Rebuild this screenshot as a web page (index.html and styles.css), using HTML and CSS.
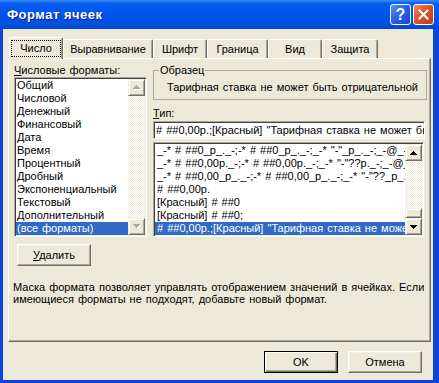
FILE: index.html
```html
<!DOCTYPE html>
<html lang="ru">

<head>
    <meta charset="UTF-8">
    <meta name="viewport" content="width=device-width, initial-scale=1.0">
    <title>Формат ячеек</title>
    <link rel="stylesheet" href="styles.css">
</head>

<body>
    <div class="window">
        <div class="titlebar">
            <span class="title">Формат ячеек</span>
            <div class="caption-buttons">
                <div class="cap-btn help">?</div>
                <div class="cap-btn close">
                    <svg width="11" height="11" viewBox="0 0 11 11"><path d="M1.5 1.5 L9.5 9.5 M9.5 1.5 L1.5 9.5" stroke="#fff" stroke-width="2" stroke-linecap="square"/></svg>
                </div>
            </div>
        </div>

        <div class="client">
            <div class="tabs">
                <div class="tab selected tab-number"><span class="focus">Число</span></div>
                <div class="tab tab-align">Выравнивание</div>
                <div class="tab tab-font">Шрифт</div>
                <div class="tab tab-border">Граница</div>
                <div class="tab tab-view">Вид</div>
                <div class="tab tab-protect">Защита</div>
            </div>

            <div class="panel">
                <div class="columns">
                    <div class="left-col">
                        <div class="label"><u>Ч</u>исловые форматы:</div>
                        <div class="listbox formats">
                            <div class="items">
                                <div class="item">Общий</div>
                                <div class="item">Числовой</div>
                                <div class="item">Денежный</div>
                                <div class="item">Финансовый</div>
                                <div class="item">Дата</div>
                                <div class="item">Время</div>
                                <div class="item">Процентный</div>
                                <div class="item">Дробный</div>
                                <div class="item">Экспоненциальный</div>
                                <div class="item">Текстовый</div>
                                <div class="item">Дополнительный</div>
                                <div class="item selected">(все форматы)</div>
                            </div>
                            <div class="scrollbar">
                                <div class="arrow">
                                    <svg width="8" height="5" viewBox="0 0 8 5"><path d="M4 1h1v1h1v1h1v1h1v1H1V4h1V3h1V2h1z" fill="#fff"/><path d="M3 0h1v1h1v1h1v1h1v1H0V3h1V2h1V1h1z" fill="#ACA899"/></svg>
                                </div>
                                <div class="track"></div>
                                <div class="arrow">
                                    <svg width="8" height="5" viewBox="0 0 8 5"><path d="M1 1h7v1H7v1H6v1H5v1H4V4H3V3H2V2H1z" fill="#fff"/><path d="M0 0h7v1H6v1H5v1H4v1H3V3H2V2H1V1H0z" fill="#ACA899"/></svg>
                                </div>
                            </div>
                        </div>
                        <button class="btn delete"><u>У</u>далить</button>
                    </div>

                    <div class="right-col">
                        <fieldset class="sample">
                            <legend>Образец</legend>
                            <div class="sample-text">Тарифная ставка не может быть отрицательной</div>
                        </fieldset>
                        <div class="label type-label"><u>Т</u>ип:</div>
                        <div class="textbox"># ##0,00р.;[Красный] "Тарифная ставка не может быть отрицательной"</div>
                        <div class="listbox types">
                            <div class="items">
                                <div class="item">_-* # ##0_р_._-;-* # ##0_р_._-;_-* "-"_р_._-;_-@_-</div>
                                <div class="item">_-* # ##0,00р._-;-* # ##0,00р._-;_-* "-"??р._-;_-@_-</div>
                                <div class="item">_-* # ##0,00_р_._-;-* # ##0,00_р_._-;_-* "-"??_р_._-;_-@_-</div>
                                <div class="item"># ##0,00р.</div>
                                <div class="item">[Красный] # ##0</div>
                                <div class="item">[Красный] # ##0;</div>
                                <div class="item selected"># ##0,00р.;[Красный] "Тарифная ставка не может быть отрицательной"</div>
                            </div>
                            <div class="scrollbar">
                                <div class="arrow">
                                    <svg width="7" height="4" viewBox="0 0 7 4"><path d="M3 0h1v1h1v1h1v1h1v1H0V3h1V2h1V1h1z" fill="#000"/></svg>
                                </div>
                                <div class="track">
                                    <div class="thumb"></div>
                                </div>
                                <div class="arrow">
                                    <svg width="7" height="4" viewBox="0 0 7 4"><path d="M0 0h7v1H6v1H5v1H4v1H3V3H2V2H1V1H0z" fill="#000"/></svg>
                                </div>
                            </div>
                        </div>
                    </div>
                </div>

                <p class="hint">Маска формата позволяет управлять отображением значений в ячейках. Если<br>имеющиеся форматы не подходят, добавьте новый формат.</p>
            </div>

            <div class="dialog-buttons">
                <button class="btn default">OK</button>
                <button class="btn">Отмена</button>
            </div>
        </div>
    </div>
</body>

</html>
```

FILE: styles.css
```css
body, html {
    margin: 0;
    padding: 0;
    font-family: "Liberation Sans", Arial, sans-serif;
    font-size: 11px;
    word-spacing: 1px;
    color: #000;
}

.window {
    width: 439px;
    height: 383px;
    box-sizing: border-box;
    background-color: #0A45DC;
    display: flex;
    flex-direction: column;
}

/* title bar */

.titlebar {
    height: 29px;
    flex-shrink: 0;
    display: flex;
    align-items: center;
    justify-content: space-between;
    padding: 0 5px 0 7px;
    background: linear-gradient(to bottom, #3D8EF7 0, #0A61F0 3px, #0058EE 8px, #0055E5 55%, #0050DD 85%, #0046CF 100%);
}

.title {
    color: white;
    font-weight: bold;
    font-size: 13px;
    letter-spacing: 0.5px;
    word-spacing: 0;
    text-shadow: 1px 1px #0F1A89;
}

.caption-buttons {
    display: flex;
    gap: 2px;
}

.cap-btn {
    width: 21px;
    height: 21px;
    box-sizing: border-box;
    border: 1px solid #fff;
    border-radius: 3px;
    display: flex;
    align-items: center;
    justify-content: center;
    color: white;
}

.help {
    background: linear-gradient(135deg, #5B8FF9 0%, #2A63E8 45%, #1847D0 100%);
    font-weight: bold;
    font-size: 16px;
}

.close {
    background: linear-gradient(135deg, #EE8A66 0%, #DE5428 45%, #C4381A 100%);
}

/* client area */

.client {
    flex: 1;
    margin: 0 6px 3px 3px;
    background-color: #ECE9D8;
    padding-top: 8px;
    display: flex;
    flex-direction: column;
}

.tabs {
    display: flex;
    align-items: flex-end;
    height: 21px;
    margin-left: 6px;
}

.tab {
    height: 19px;
    box-sizing: border-box;
    border: 1px solid;
    border-color: #fff #716F64 transparent #fff;
    border-bottom: none;
    border-radius: 2px 2px 0 0;
    box-shadow: inset -1px 0 #ACA899;
    display: flex;
    align-items: center;
    justify-content: center;
    background-color: #ECE9D8;
}

.tab.selected {
    height: 22px;
    margin-bottom: -1px;
    position: relative;
    z-index: 1;
}

.tab-number { width: 54px; }
.tab-align { width: 90px; }
.tab-font { width: 54px; }
.tab-border { width: 61px; }
.tab-view { width: 54px; }
.tab-protect { width: 56px; }

.focus {
    border: 1px dotted #000;
    padding: 1px 8px;
    line-height: 13px;
}

.panel {
    width: 423px;
    height: 284px;
    margin-left: 5px;
    box-sizing: border-box;
    border: 1px solid;
    border-color: #fff #716F64 #716F64 #fff;
    box-shadow: inset -1px -1px #ACA899;
    padding: 5px 0 0 5px;
}

.columns {
    display: flex;
    gap: 6px;
}

.left-col {
    width: 133px;
    display: flex;
    flex-direction: column;
    align-items: flex-start;
}

.right-col {
    width: 274px;
    display: flex;
    flex-direction: column;
}

.label {
    height: 13px;
    line-height: 13px;
    white-space: nowrap;
}

/* lists */

.listbox {
    box-sizing: border-box;
    border: 1px solid;
    border-color: #ACA899 #fff #fff #ACA899;
    box-shadow: inset 1px 1px #404040, inset -1px -1px #F1EFE2;
    background-color: #fff;
    padding: 1px;
    display: flex;
}

.formats {
    width: 133px;
    height: 160px;
}

.types {
    width: 271px;
    height: 95px;
    margin-top: 3px;
}

.items {
    flex: 1;
    overflow: hidden;
    min-width: 0;
}

.item {
    height: 13px;
    line-height: 13px;
    padding-left: 1px;
    white-space: nowrap;
    overflow: hidden;
}

.types .item {
    padding-left: 2px;
}

.item.selected {
    background-color: #316AC5;
    color: #fff;
}

.scrollbar {
    width: 17px;
    display: flex;
    flex-direction: column;
}

.arrow, .thumb {
    box-sizing: border-box;
    background-color: #ECE9D8;
    border: 1px solid;
    border-color: #F1EFE2 #716F64 #716F64 #F1EFE2;
    box-shadow: inset 1px 1px #fff, inset -1px -1px #ACA899;
}

.arrow {
    height: 17px;
    display: flex;
    align-items: center;
    justify-content: center;
}

.arrow svg {
    display: block;
}

.track {
    flex: 1;
    display: flex;
    flex-direction: column;
    justify-content: flex-end;
    background: repeating-conic-gradient(#fff 0 25%, #ECE9D8 0 50%) 0 0 / 2px 2px;
}

.thumb {
    height: 10px;
}

/* sample box */

.sample {
    margin: 0;
    padding: 4px 12px 5px 13px;
    border: 1px solid #ACA899;
    min-width: 0;
}

.sample legend {
    padding: 0 1px;
    margin-left: -8px;
    line-height: 13px;
}

.sample-text {
    line-height: 13px;
    white-space: nowrap;
}

.type-label {
    margin-top: 7px;
}

.textbox {
    width: 272px;
    height: 18px;
    margin-top: 1px;
    box-sizing: border-box;
    border: 1px solid;
    border-color: #ACA899 #fff #fff #ACA899;
    box-shadow: inset 1px 1px #404040, inset -1px -1px #F1EFE2;
    background-color: #fff;
    padding: 0 2px;
    line-height: 16px;
    white-space: nowrap;
    overflow: hidden;
}

/* buttons */

.btn {
    width: 74px;
    height: 22px;
    box-sizing: border-box;
    padding: 0;
    font-family: inherit;
    font-size: 11px;
    color: #000;
    background-color: #ECE9D8;
    border: 1px solid;
    border-color: #fff #716F64 #716F64 #fff;
    box-shadow: inset -1px -1px #ACA899, inset 1px 1px #F1EFE2;
}

.btn.default {
    border-color: #000;
    box-shadow: inset 1px 1px #fff, inset -1px -1px #716F64, inset -2px -2px #ACA899;
}

.delete {
    margin: 7px 0 0 3px;
}

.hint {
    margin: 15px 0 0 -1px;
    line-height: 12px;
    white-space: nowrap;
}

.dialog-buttons {
    display: flex;
    justify-content: flex-end;
    gap: 10px;
    margin-top: 9px;
    padding-right: 11px;
}
```
